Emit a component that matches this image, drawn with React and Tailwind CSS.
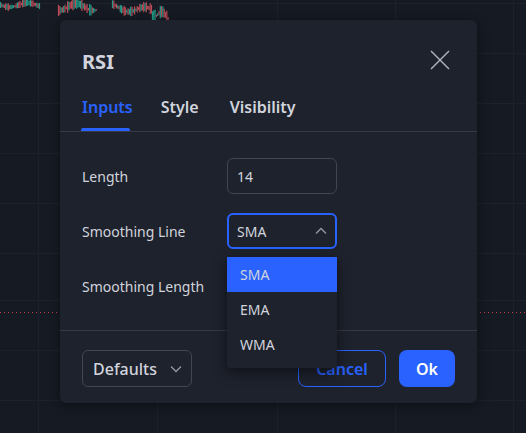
import React from "react";

const candles = (() => {
  let s = 11;
  const rnd = () => {
    s = (s * 9301 + 49297) % 233280;
    return s / 233280;
  };
  const out = [];
  const segs = [
    [0, 40, 5, 6, 0],
    [58, 96, 7, 10, 0],
    [112, 152, 7, 9, 4],
    [152, 172, 12, 12, 8],
  ];
  segs.forEach(([a, b, base, amp, drift]) => {
    for (let x = a; x < b; x += 1.3) {
      const t = (x - a) / (b - a);
      const mid = base + Math.sin(t * 7 + a) * amp * 0.35 + t * drift;
      const h = 2 + rnd() * amp;
      const up = rnd() > 0.55;
      out.push({ x, y1: Math.max(0, mid - h / 2), y2: Math.min(21, mid + h / 2), up });
    }
  });
  return out;
})();

const vLines = [38, 157, 277, 395, 513];
const hLines = [3, 53, 103, 153, 203, 253, 300, 350, 400];

function Background() {
  return (
    <svg className="absolute inset-0" width="526" height="433">
      {vLines.map((x) => (
        <line key={"v" + x} x1={x + 0.5} y1="0" x2={x + 0.5} y2="433" stroke="#1d212b" strokeWidth="1" />
      ))}
      {hLines.map((y) => (
        <line key={"h" + y} x1="0" y1={y + 0.5} x2="526" y2={y + 0.5} stroke="#1d212b" strokeWidth="1" />
      ))}
      <line x1="0" y1="312.5" x2="526" y2="312.5" stroke="#d0394d" strokeWidth="1" strokeDasharray="1 3" />
      {candles.map((c, i) => (
        <line
          key={i}
          x1={c.x + 0.5}
          x2={c.x + 0.5}
          y1={c.y1}
          y2={c.y2}
          stroke={c.up ? "#22ab94" : "#c9525e"}
          strokeWidth="1.2"
          opacity="0.9"
        />
      ))}
    </svg>
  );
}

function ChevronDown() {
  return (
    <svg width="12" height="8" viewBox="0 0 12 8" fill="none">
      <path d="M1 1.5l5 5 5-5" stroke="#9598a1" strokeWidth="1.3" />
    </svg>
  );
}

function ChevronUp() {
  return (
    <svg width="12" height="8" viewBox="0 0 12 8" fill="none">
      <path d="M1 6.5l5-5 5 5" stroke="#9598a1" strokeWidth="1.3" />
    </svg>
  );
}

export default function App() {
  return (
    <div
      className="relative w-[526px] h-[433px] overflow-hidden bg-[#161a23]"
      style={{ fontFamily: '"Noto Sans", "Open Sans", sans-serif' }}
    >
      <Background />
      <div className="absolute left-[60px] top-[20px] w-[417px] h-[383px] rounded-[6px] bg-[#1e222d] shadow-[0_2px_12px_rgba(0,0,0,0.45)] flex flex-col">
        {/* header */}
        <div className="flex items-center justify-between pl-[22px] pr-[27px] pt-[24px] h-[60px]">
          <div className="text-[20px] leading-[28px] font-bold text-[#d1d4dc]">RSI</div>
          <svg width="20" height="20" viewBox="0 0 20 20" fill="none" className="-mt-[4px]">
            <path d="M1 1l18 18M19 1L1 19" stroke="#b2b5be" strokeWidth="1.4" />
          </svg>
        </div>
        {/* tabs */}
        <div className="flex pl-[21px] border-b border-[#363a45] h-[52px]">
          <div className="flex flex-col pt-[15px]">
            <span className="px-[1px] text-[16px] leading-[24px] font-semibold text-[#2962ff]">Inputs</span>
            <span className="mt-auto w-[49px] h-[3px] bg-[#2962ff] rounded-t-[2px]"></span>
          </div>
          <div className="pt-[15px] ml-[27px]">
            <span className="text-[16px] leading-[24px] font-semibold text-[#d1d4dc]">Style</span>
          </div>
          <div className="pt-[15px] ml-[31px]">
            <span className="text-[16px] leading-[24px] font-semibold text-[#d1d4dc]">Visibility</span>
          </div>
        </div>
        {/* body */}
        <div className="relative flex-1 flex flex-col gap-[19px] pl-[22px] pt-[26px] border-b border-[#363a45]">
          <div className="flex items-center">
            <span className="w-[145px] text-[14px] text-[#d1d4dc]">Length</span>
            <div className="w-[110px] h-[36px] rounded-[6px] border border-[#434651] flex items-center pl-[9px] text-[14px] text-[#d1d4dc]">
              14
            </div>
          </div>
          <div className="flex items-center">
            <span className="w-[145px] text-[14px] text-[#d1d4dc]">Smoothing Line</span>
            <div className="w-[110px] h-[36px] rounded-[6px] border-2 border-[#2962ff] flex items-center justify-between pl-[8px] pr-[8px] text-[14px] text-[#d1d4dc]">
              <span>SMA</span>
              <ChevronUp />
            </div>
          </div>
          <div className="flex items-center">
            <span className="w-[145px] text-[14px] text-[#d1d4dc]">Smoothing Length</span>
            <div className="w-[110px] h-[36px]"></div>
          </div>
        </div>
        {/* footer */}
        <div className="h-[72px] flex items-start pt-[19px] pl-[22px] pr-[22px]">
          <div className="w-[110px] h-[37px] rounded-[6px] border border-[#434651] flex items-center justify-between pl-[10px] pr-[9px] text-[16px] font-medium text-[#d1d4dc]">
            <span>Defaults</span>
            <ChevronDown />
          </div>
          <div className="ml-auto w-[88px] h-[37px] rounded-[8px] border border-[#2962ff] flex items-center justify-center text-[16px] font-semibold text-[#2962ff]">
            Cancel
          </div>
          <div className="ml-[13px] w-[56px] h-[37px] rounded-[8px] bg-[#2962ff] flex items-center justify-center text-[16px] font-semibold text-white">
            Ok
          </div>
        </div>
        {/* dropdown menu */}
        <div className="absolute left-[167px] top-[237px] w-[110px] pb-[6px] bg-[#1e222d] rounded-b-[4px] shadow-[0_4px_14px_rgba(0,0,0,0.55)] z-10">
          <div className="h-[35px] bg-[#2962ff] flex items-center pl-[13px] text-[14px] text-[#d1d4dc]">SMA</div>
          <div className="h-[35px] flex items-center pl-[13px] text-[14px] text-[#d1d4dc]">EMA</div>
          <div className="h-[35px] flex items-center pl-[13px] text-[14px] text-[#d1d4dc]">WMA</div>
        </div>
      </div>
    </div>
  );
}
